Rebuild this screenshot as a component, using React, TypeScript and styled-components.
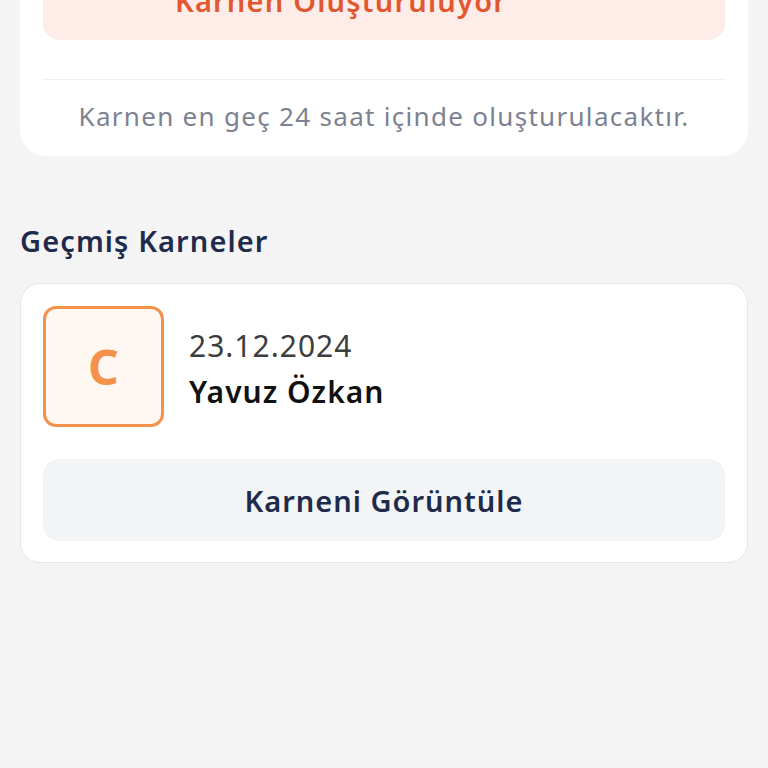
import styled, { createGlobalStyle } from "styled-components";

const GlobalStyle = createGlobalStyle`
  html, body {
    margin: 0;
    padding: 0;
    background: #f4f4f5;
    font-family: "Noto Sans", "Open Sans", sans-serif;
  }
  * { box-sizing: border-box; }
`;

const Page = styled.div`
  width: 768px;
  height: 768px;
  overflow: hidden;
  background: #f4f4f5;
`;

// the screen is scrolled a little, the top of the status card is above the fold
const Content = styled.div`
  margin-top: -60px;
  padding: 0 20px;
`;

const StatusCard = styled.div`
  background: #ffffff;
  border-radius: 26px;
  padding: 20px 23px 22px;
`;

const StatusBox = styled.div`
  height: 80px;
  border-radius: 16px;
  background: #fdece7;
  display: flex;
  align-items: center;
  justify-content: center;
  padding-right: 86px;
`;

const StatusText = styled.span`
  font-size: 29px;
  font-weight: 600;
  letter-spacing: 1.2px;
  color: #e2572f;
`;

const Divider = styled.div`
  height: 1px;
  background: #eef0f3;
  margin-top: 39px;
`;

const Note = styled.p`
  margin: 0;
  padding-top: 18px;
  text-align: center;
  font-size: 26px;
  line-height: 36px;
  letter-spacing: 1.3px;
  color: #7c8291;
`;

const SectionTitle = styled.h2`
  margin: 68px 0 25px;
  font-size: 29px;
  line-height: 34px;
  font-weight: 600;
  letter-spacing: 1.1px;
  color: #1f2b4b;
`;

const ReportCard = styled.div`
  background: #ffffff;
  border: 1px solid #e4e6ea;
  border-radius: 20px;
  padding: 22px 22px 21px;
`;

const ReportRow = styled.div`
  display: flex;
  align-items: center;
  gap: 25px;
`;

const GradeBox = styled.div`
  width: 121px;
  height: 121px;
  border: 3px solid #f4914a;
  border-radius: 13px;
  background: #fff7f1;
  display: flex;
  align-items: center;
  justify-content: center;
  font-size: 48px;
  font-weight: 700;
  color: #f4914a;
`;

const Info = styled.div`
  display: flex;
  flex-direction: column;
  gap: 6px;
  padding-top: 4px;
`;

const DateText = styled.span`
  font-size: 30px;
  line-height: 40px;
  letter-spacing: 1px;
  color: #3d3d3f;
`;

const NameText = styled.span`
  font-size: 30px;
  line-height: 40px;
  font-weight: 600;
  letter-spacing: 1px;
  color: #111111;
`;

const ViewButton = styled.button`
  margin-top: 32px;
  width: 100%;
  height: 82px;
  border: none;
  border-radius: 16px;
  background: #f3f4f6;
  font-family: inherit;
  font-size: 29px;
  font-weight: 600;
  letter-spacing: 1px;
  color: #1f2b4b;
`;

export default function App() {
  return (
    <Page>
      <GlobalStyle />
      <Content>
        <StatusCard>
          <StatusBox>
            <StatusText>Karnen Oluşturuluyor</StatusText>
          </StatusBox>
          <Divider />
          <Note>Karnen en geç 24 saat içinde oluşturulacaktır.</Note>
        </StatusCard>
        <SectionTitle>Geçmiş Karneler</SectionTitle>
        <ReportCard>
          <ReportRow>
            <GradeBox>C</GradeBox>
            <Info>
              <DateText>23.12.2024</DateText>
              <NameText>Yavuz Özkan</NameText>
            </Info>
          </ReportRow>
          <ViewButton>Karneni Görüntüle</ViewButton>
        </ReportCard>
      </Content>
    </Page>
  );
}
